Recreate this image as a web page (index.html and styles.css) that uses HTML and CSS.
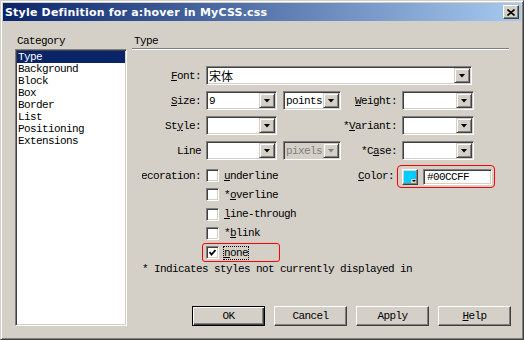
FILE: index.html
```html
<!DOCTYPE html>
<html lang="en">
<head>
  <meta charset="UTF-8">
  <title>Style Definition</title>
  <link rel="stylesheet" href="styles.css">
</head>
<body>

<div class="window">
  <div class="titlebar">
    <span class="title">Style Definition for a:hover in MyCSS.css</span>
    <span class="close">
      <svg width="8" height="7" viewBox="0 0 8 7"><path d="M0.5 0.5 L7.5 6.5 M7.5 0.5 L0.5 6.5" stroke="#000" stroke-width="1.6"/></svg>
    </span>
  </div>

  <div class="content">
    <div class="side">
      <div class="caption">Category</div>
      <ul class="list">
        <li class="sel">Type</li>
        <li>Background</li>
        <li>Block</li>
        <li>Box</li>
        <li>Border</li>
        <li>List</li>
        <li>Positioning</li>
        <li>Extensions</li>
      </ul>
    </div>

    <div class="main">
      <div class="caption head">Type</div>
      <div class="rule"></div>

      <div class="form">
        <span class="lbl"><u>F</u>ont:</span>
        <div class="field wide"><span class="val cjk">宋体</span><span class="drop"></span></div>

        <span class="lbl"><u>S</u>ize:</span>
        <div class="field"><span class="val">9</span><span class="drop"></span></div>
        <div class="field units"><span class="val">points</span><span class="drop"></span></div>
        <span class="lbl"><u>W</u>eight:</span>
        <div class="field"><span class="val"></span><span class="drop"></span></div>

        <span class="lbl">St<u>y</u>le:</span>
        <div class="field"><span class="val"></span><span class="drop"></span></div>
        <span></span>
        <span class="lbl">*<u>V</u>ariant:</span>
        <div class="field"><span class="val"></span><span class="drop"></span></div>

        <span class="lbl">Line</span>
        <div class="field"><span class="val"></span><span class="drop"></span></div>
        <div class="field units disabled"><span class="val">pixels</span><span class="drop"></span></div>
        <span class="lbl">*C<u>a</u>se:</span>
        <div class="field"><span class="val"></span><span class="drop"></span></div>
      </div>

      <div class="deco">
        <span class="lbl">Decoration:</span>
        <div class="checks">
          <div class="check"><span class="box"></span><span><u>u</u>nderline</span></div>
          <div class="check"><span class="box"></span><span>*<u>o</u>verline</span></div>
          <div class="check"><span class="box"></span><span><u>l</u>ine-through</span></div>
          <div class="check"><span class="box"></span><span>*<u>b</u>link</span></div>
          <div class="check on">
            <span class="box"><svg width="7" height="7" viewBox="0 0 7 7"><polyline points="0.5,3 2.5,5.5 6.5,1" fill="none" stroke="#000" stroke-width="1.8"/></svg></span>
            <span class="focus"><u>n</u>one</span>
          </div>
        </div>
        <span class="lbl colorlbl"><u>C</u>olor:</span>
        <div class="picker">
          <span class="swatch">
            <svg width="12" height="12" viewBox="0 0 12 12">
              <polygon points="0,0 12,0 12,8 7,8 7,12 0,12" fill="#00ccff"/>
              <polygon points="8,9 12,9 10,11" fill="#000"/>
            </svg>
          </span>
          <span class="hex">#00CCFF</span>
        </div>
      </div>

      <p class="note">* Indicates styles not currently displayed in</p>

      <div class="buttons">
        <span class="btn default">OK</span>
        <span class="btn">Cancel</span>
        <span class="btn">Apply</span>
        <span class="btn"><u>H</u>elp</span>
      </div>
    </div>
  </div>
</div>

</body>
</html>
```

FILE: styles.css
```css
body {
  margin: 0;
  font-family: "Liberation Mono", "Noto Sans CJK SC", monospace;
  font-size: 11px;
  letter-spacing: -0.6px;
  color: #000;
}
.window {
  width: 524px;
  height: 340px;
  box-sizing: border-box;
  background: #d4d0c8;
  border: 1px solid;
  border-color: #d4d0c8 #404040 #404040 #d4d0c8;
  box-shadow: inset 1px 1px #fff, inset -1px -1px #808080;
  padding: 2px;
  display: flex;
  flex-direction: column;
}
.titlebar {
  height: 18px;
  flex: none;
  background: linear-gradient(to right, #0a246a, #a6caf0);
  display: flex;
  align-items: center;
  justify-content: space-between;
  padding: 0 2px;
}
.title {
  color: #fff;
  font-family: "DejaVu Sans", sans-serif;
  font-weight: bold;
  font-size: 11px;
  letter-spacing: 0.2px;
}
.close {
  width: 16px;
  height: 14px;
  box-sizing: border-box;
  background: #d4d0c8;
  border: 1px solid;
  border-color: #fff #404040 #404040 #fff;
  box-shadow: inset -1px -1px #808080;
  display: flex;
  align-items: center;
  justify-content: center;
}
.content {
  flex: 1;
  display: flex;
  gap: 5px;
  padding: 13px 10px 11px 12px;
}
.side {
  width: 112px;
  display: flex;
  flex-direction: column;
}
.caption {
  height: 15px;
  line-height: 15px;
  padding-left: 2px;
}
.caption.head {
  height: 14px;
}
.list {
  flex: 1;
  margin: 0;
  padding: 1px;
  list-style: none;
  background: #fff;
  border: 1px solid;
  border-color: #808080 #fff #fff #808080;
  box-shadow: inset 1px 1px #404040, inset -1px -1px #d4d0c8;
}
.list li {
  height: 12px;
  line-height: 12px;
  padding-left: 1px;
}
.list .sel {
  background: #0a246a;
  color: #fff;
}
.main {
  flex: 1;
  display: flex;
  flex-direction: column;
}
.rule {
  border-top: 1px solid #808080;
  border-bottom: 1px solid #fff;
  margin-right: 2px;
}
.form {
  display: grid;
  grid-template-columns: 64px 71px 64px 61px 72px;
  grid-auto-rows: 19px;
  row-gap: 6px;
  margin-top: 16px;
  padding-left: 10px;
}
.lbl {
  display: flex;
  justify-content: flex-end;
  align-items: center;
  padding-right: 5px;
  white-space: nowrap;
  overflow: hidden;
}
.field {
  box-sizing: border-box;
  height: 19px;
  background: #fff;
  border: 1px solid;
  border-color: #808080 #fff #fff #808080;
  box-shadow: inset 1px 1px #404040, inset -1px -1px #d4d0c8;
  padding: 1px;
  display: flex;
  align-items: center;
}
.field .val {
  flex: 1;
  padding-left: 1px;
  white-space: nowrap;
  overflow: hidden;
}
.cjk {
  font-family: "Noto Sans CJK SC", sans-serif;
  letter-spacing: 0;
  font-size: 12px;
}
.drop {
  width: 16px;
  height: 15px;
  flex: none;
  box-sizing: border-box;
  background: #d4d0c8;
  border: 1px solid;
  border-color: #d4d0c8 #404040 #404040 #d4d0c8;
  box-shadow: inset 1px 1px #fff, inset -1px -1px #808080;
  display: flex;
  align-items: center;
  justify-content: center;
}
.drop::after {
  content: "";
  width: 7px;
  height: 4px;
  background: #000;
  clip-path: polygon(0 0, 100% 0, 50% 100%);
}
.wide {
  grid-column: 2 / 6;
  margin-right: 2px;
}
.units {
  margin-left: 6px;
}
.disabled {
  background: #d4d0c8;
  color: #808080;
}
.disabled .drop::after {
  background: #808080;
}
.deco {
  display: flex;
  margin-top: 6px;
  padding-left: 10px;
}
.deco .lbl {
  width: 64px;
  height: 19px;
  box-sizing: border-box;
  flex: none;
}
.checks {
  width: 135px;
  display: flex;
  flex-direction: column;
}
.check {
  height: 19.25px;
  display: flex;
  align-items: center;
}
.box {
  width: 13px;
  height: 13px;
  flex: none;
  box-sizing: border-box;
  background: #fff;
  border: 1px solid;
  border-color: #808080 #fff #fff #808080;
  box-shadow: inset 1px 1px #404040, inset -1px -1px #d4d0c8;
  margin-right: 5px;
  display: flex;
  align-items: center;
  justify-content: center;
}
.check.on {
  box-sizing: border-box;
  width: 78px;
  margin-left: -4px;
  padding-left: 3px;
  border: 1px solid #f00;
  border-radius: 3px;
}
.focus {
  outline: 1px dotted #000;
}
.deco .colorlbl {
  width: 54px;
  padding-right: 1px;
}
.picker {
  align-self: flex-start;
  margin: -1px 0 0 2px;
  padding: 3px 2px 2px 4px;
  border: 1px solid #f00;
  border-radius: 4px;
  display: flex;
  gap: 5px;
}
.swatch {
  width: 16px;
  height: 16px;
  box-sizing: border-box;
  background: #d4d0c8;
  border: 1px solid;
  border-color: #fff #404040 #404040 #fff;
  box-shadow: inset -1px -1px #808080;
  display: flex;
  align-items: center;
  justify-content: center;
}
.hex {
  width: 69px;
  height: 16px;
  box-sizing: border-box;
  background: #fff;
  border: 1px solid;
  border-color: #808080 #fff #fff #808080;
  box-shadow: inset 1px 1px #404040, inset -1px -1px #d4d0c8;
  padding-left: 3px;
  line-height: 14px;
}
.note {
  margin: 1px 0 0;
  padding-left: 10px;
  line-height: 12px;
}
.buttons {
  margin-top: auto;
  display: flex;
  justify-content: flex-end;
  gap: 9px;
}
.btn {
  width: 73px;
  height: 20px;
  box-sizing: border-box;
  border: 1px solid;
  border-color: #fff #404040 #404040 #fff;
  box-shadow: inset -1px -1px #808080;
  display: flex;
  align-items: center;
  justify-content: center;
}
.btn.default {
  border-color: #000;
  box-shadow: inset 1px 1px #fff, inset -1px -1px #404040, inset -2px -2px #808080;
}
```
